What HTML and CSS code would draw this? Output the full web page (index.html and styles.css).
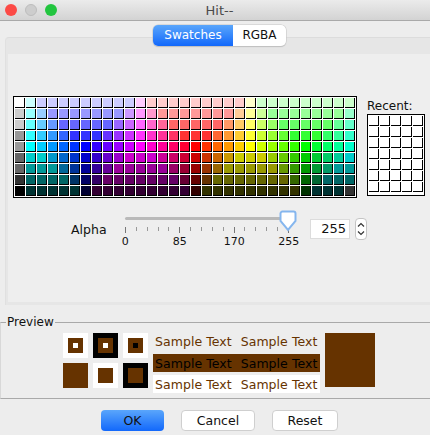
FILE: index.html
```html
<!DOCTYPE html>
<html lang="en">

<head>
    <meta charset="UTF-8">
    <title>Hit--</title>
    <link rel="stylesheet" href="styles.css">
</head>

<body>
    <!-- window title -->
    <header class="titlebar">
        <div class="traffic">
            <span class="light light-close"></span>
            <span class="light light-min"></span>
            <span class="light light-zoom"></span>
        </div>
        <div class="title">Hit--</div>
    </header>

    <!-- chooser tabs -->
    <div class="tabs">
        <div class="tab tab-active">Swatches</div>
        <div class="tab">RGBA</div>
    </div>

    <section class="tab-pane">
        <div class="tab-content">
            <div class="swatch-row">
                <div class="swatches" id="mainSwatches"></div>
                <div class="recent">
                    <div class="recent-label">Recent:</div>
                    <div class="swatches recent-grid" id="recentSwatches"></div>
                </div>
            </div>

            <div class="alpha-row">
                <div class="alpha-label">Alpha</div>
                <div class="slider">
                    <div class="slider-track"></div>
                    <div class="slider-ticks" id="sliderTicks"></div>
                    <div class="slider-labels">
                        <span>0</span>
                        <span>85</span>
                        <span>170</span>
                        <span>255</span>
                    </div>
                    <svg class="slider-thumb" width="18" height="22" viewBox="0 0 18 22">
                        <path d="M3.5 1.5h11a2 2 0 0 1 2 2v7.5l-7.5 9l-7.5-9v-7.5a2 2 0 0 1 2-2z" fill="#fff" stroke="#85b6ee" stroke-width="2"/>
                    </svg>
                </div>
                <div class="alpha-input">255</div>
                <div class="spinner">
                    <svg width="8" height="18" viewBox="0 0 8 18">
                        <path d="M1 6.5l3-3l3 3M1 11.5l3 3l3-3" fill="none" stroke="#333" stroke-width="1.2"/>
                    </svg>
                </div>
            </div>
        </div>
    </section>

    <!-- preview -->
    <fieldset class="preview">
        <legend>Preview</legend>
        <div class="preview-squares">
            <div class="square bg-white"><div class="inner"><div class="dot bg-white"></div></div></div>
            <div class="square bg-black"><div class="inner"><div class="dot bg-white"></div></div></div>
            <div class="square bg-white"><div class="inner"><div class="dot bg-black"></div></div></div>
            <div class="square bg-brown"></div>
            <div class="square bg-white"><div class="inner"></div></div>
            <div class="square bg-black"><div class="inner"></div></div>
        </div>
        <div class="preview-text">
            <div class="sample-row"><span>Sample Text</span><span>Sample Text</span></div>
            <div class="sample-row sample-dark"><span>Sample Text</span><span>Sample Text</span></div>
            <div class="sample-row sample-light"><span>Sample Text</span><span>Sample Text</span></div>
        </div>
        <div class="preview-solid"></div>
    </fieldset>

    <!-- buttons -->
    <div class="buttons">
        <button class="btn btn-primary">OK</button>
        <button class="btn btn-cancel">Cancel</button>
        <button class="btn btn-reset">Reset</button>
    </div>

    <script src="swatches.js"></script>
</body>

</html>
```

FILE: styles.css
```css
* {
    box-sizing: border-box;
}

html,
body {
    margin: 0;
    height: 435px;
    overflow: hidden;
}

body {
    position: relative;
    background: #ededed;
    color: #111;
    font-family: "DejaVu Sans", sans-serif;
    font-size: 12px;
}

/* title bar */
.titlebar {
    display: flex;
    align-items: center;
    justify-content: center;
    position: relative;
    height: 21px;
    background: linear-gradient(#ebebeb, #d3d3d3);
    border-bottom: 1px solid #a9a9a9;
}

.traffic {
    position: absolute;
    left: 5px;
    top: 4px;
    display: flex;
    gap: 8px;
}

.light {
    width: 12px;
    height: 12px;
    border-radius: 50%;
}

.light-close {
    background: #fc4a46;
}

.light-min {
    background: #cdcdcd;
    border: 1px solid #bdbdbd;
}

.light-zoom {
    background: #22c53f;
}

.title {
    margin-left: 9px;
    color: #4a4a4a;
    font-size: 13px;
}

/* tabs */
.tabs {
    position: absolute;
    left: 153px;
    top: 25px;
    z-index: 1;
    display: flex;
    width: 133px;
    height: 21px;
    border-radius: 5px;
    overflow: hidden;
    background: #fff;
    box-shadow: 0 0 0 0.5px #c6c6c6, 0 1px 1px #bbb;
}

.tab {
    flex: 1;
    text-align: center;
    line-height: 20px;
    font-size: 12px;
}

.tab-active {
    flex: 0 0 80px;
    color: #fff;
    background: linear-gradient(#5aa6fb, #1268fb);
}

/* tab pane, open on the right side */
.tab-pane {
    margin: 16px 0 0 5px;
    height: 268px;
    padding: 16px 0 3px 2px;
    background: #e6e6e6;
    border-top: 1px solid #dcdcdc;
    border-left: 1px solid #e0e0e0;
    border-top-left-radius: 4px;
}

.tab-content {
    height: 100%;
    padding: 42px 0 0 5px;
    background: #eeeeee;
}

.swatch-row {
    display: flex;
    align-items: flex-end;
    gap: 10px;
}

.swatches {
    display: grid;
    grid-template-columns: repeat(31, 10px);
    gap: 1px;
    padding: 1px;
    border: 1px solid #000;
    background: #fff;
}

.swatch {
    height: 10px;
    border-right: 1px solid #000;
    border-bottom: 1px solid #000;
}

.recent {
    margin-bottom: 2px;
}

.recent-label {
    margin-bottom: 1px;
    font-size: 12px;
    line-height: 14px;
}

.recent-grid {
    grid-template-columns: repeat(5, 10px);
    padding-bottom: 3px;
}

/* alpha slider */
.alpha-row {
    display: flex;
    align-items: flex-start;
    margin-top: 12px;
}

.alpha-label {
    width: 54px;
    margin: 12px 0 0 58px;
    font-size: 12.5px;
}

.slider {
    position: relative;
    width: 165px;
    height: 40px;
}

.slider-track {
    height: 3px;
    margin-top: 7px;
    background: #b9b9b9;
    border-radius: 2px;
}

.slider-ticks {
    display: flex;
    justify-content: space-between;
    width: 164px;
    height: 6px;
    margin-top: 7px;
}

.tick {
    width: 1px;
    height: 4px;
    background: #999;
}

.tick-major {
    height: 6px;
    background: #777;
}

.slider-labels {
    display: flex;
    width: 218px;
    margin: 2px 0 0 -27px;
    font-size: 11px;
    line-height: 13px;
}

.slider-labels span {
    flex: 0 0 54.5px;
    text-align: center;
}

.slider-thumb {
    position: absolute;
    right: -7px;
    top: 0;
}

.alpha-input {
    width: 40px;
    height: 20px;
    margin: 9px 0 0 20px;
    padding-right: 3px;
    background: #fff;
    border: 1px solid #dcdcdc;
    text-align: right;
    font-size: 13px;
    line-height: 18px;
}

.spinner {
    display: flex;
    align-items: center;
    justify-content: center;
    width: 12px;
    height: 22px;
    margin: 8px 0 0 5px;
    background: #fff;
    border: 1px solid #c4c4c4;
    border-radius: 4px;
}

/* preview */
.preview {
    display: flex;
    align-items: flex-start;
    height: 84px;
    margin: 10px 0 0;
    padding: 4px 0 0 62px;
    border: 0;
    border-top: 1px solid #a9a9a9;
    border-bottom: 1px solid #a9a9a9;
    border-left: 1px solid #d8d8d8;
    min-width: 0;
}

.preview legend {
    margin-left: -57px;
    padding: 0 1px;
    font-size: 12px;
    line-height: 14px;
}

.preview-squares {
    display: grid;
    grid-template-columns: repeat(3, 25px);
    gap: 5px;
}

.square {
    display: flex;
    align-items: center;
    justify-content: center;
    height: 25px;
}

.inner {
    display: flex;
    align-items: center;
    justify-content: center;
    width: 15px;
    height: 15px;
    background: #663300;
}

.dot {
    width: 5px;
    height: 5px;
}

.bg-white {
    background: #fff;
}

.bg-black {
    background: #000;
}

.bg-brown {
    background: #663300;
}

.preview-text {
    display: flex;
    flex-direction: column;
    gap: 3px;
    width: 167px;
    margin-left: 5px;
}

.sample-row {
    display: flex;
    gap: 9px;
    height: 18px;
    padding-left: 2px;
    color: #663300;
    font-size: 12.5px;
    letter-spacing: 0.05px;
    line-height: 18px;
}

.sample-dark {
    background: #663300;
    color: #000;
    line-height: 20px;
}

.sample-light {
    background: #fff;
    line-height: 20px;
}

.preview-solid {
    width: 50px;
    height: 54px;
    margin-left: 5px;
    background: #663300;
}

/* buttons */
.buttons {
    display: flex;
    gap: 17px;
    margin: 11px 0 0 101px;
}

.btn {
    height: 21px;
    padding: 0;
    background: #fff;
    border: 1px solid #cfcfcf;
    border-radius: 4px;
    color: #111;
    font-family: inherit;
    font-size: 12.5px;
}

.btn-primary {
    width: 63px;
    border: 0;
    background: linear-gradient(#5aa6fb, #1268fb);
}

.btn-cancel {
    width: 74px;
}

.btn-reset {
    width: 66px;
}
```

FILE: swatches.js
```js
// colour table, one line per row, "CCF*9" means nine cells of CCF
const rows = [
    'FFF CFF CCF*9 FCF FCC*9 FFC CFC*9',
    'CCC 9FF 9CF 99F*7 C9F F9F F9C F99*7 FC9 FF9 CF9 9F9*7 9FC',
    'CCC 6FF 6CF 69F 66F*5 96F C6F F6F F6C F69 F66*5 F96 FC6 FF6 CF6 9F6 6F6*5 6F9 6FC',
    '999 3FF 3CF 39F 36F 33F*3 63F 93F C3F F3F F3C F39 F36 F33*3 F63 F93 FC3 FF3 CF3 9F3 6F3 3F3*3 3F6 3F9 3FC',
    '999 0FF 0CF 09F 06F 03F 00F 30F 60F 90F C0F F0F F0C F09 F06 F03 F00 F30 F60 F90 FC0 FF0 CF0 9F0 6F0 3F0 0F0 0F3 0F6 0F9 0FC',
    '666 0CC*2 09C 06C 03C 00C 30C 60C 90C C0C*3 C09 C06 C03 C00 C30 C60 C90 CC0*3 9C0 6C0 3C0 0C0 0C3 0C6 0C9 0CC',
    '666 099*3 069 039 009 309 609 909*5 906 903 900 930 960 990*5 690 390 090 093 096 099*2',
    '333 066*4 036 006 306 606*7 603 600 630 660*7 360 060 063 066*3',
    '000 033*5 003 303*9 300 330*9 030 033*3 333'
];

const main = document.getElementById('mainSwatches');
rows.forEach(row => {
    row.split(' ').forEach(item => {
        const [colour, count] = item.split('*');
        for (let i = 0; i < (count || 1); i++) {
            const cell = document.createElement('div');
            cell.className = 'swatch';
            cell.style.background = '#' + colour;
            main.appendChild(cell);
        }
    });
});

const recent = document.getElementById('recentSwatches');
for (let i = 0; i < 35; i++) {
    const cell = document.createElement('div');
    cell.className = 'swatch';
    recent.appendChild(cell);
}

// slider ticks, a major one every fifth
const ticks = document.getElementById('sliderTicks');
for (let i = 0; i <= 15; i++) {
    const tick = document.createElement('div');
    tick.className = i % 5 === 0 ? 'tick tick-major' : 'tick';
    ticks.appendChild(tick);
}
```
